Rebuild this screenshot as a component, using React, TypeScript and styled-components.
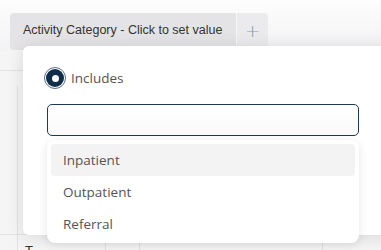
import React from "react";
import styled, { createGlobalStyle } from "styled-components";

const Global = createGlobalStyle`
  html, body { margin: 0; padding: 0; background: #fff; }
  * { box-sizing: border-box; }
`;

const Stage = styled.div`
  position: relative;
  width: 381px;
  height: 250px;
  overflow: hidden;
  background: #f6f6f7;
  display: flex;
  flex-direction: column;
`;

const TopBar = styled.div`
  height: 50px;
  flex: none;
  padding: 13px 0 0 10px;
  background: linear-gradient(to bottom, #fdfdfd 0%, #f3f3f5 100%);
  display: flex;
  align-items: stretch;
  gap: 1px;
`;

const Tab = styled.div<{ $narrow?: boolean }>`
  background: ${(p) => (p.$narrow ? "#ebebee" : "#e4e4e7")};
  border-radius: ${(p) => (p.$narrow ? "0 4px 0 0" : "4px 0 0 4px")};
  width: ${(p) => (p.$narrow ? "31px" : "226px")};
  display: flex;
  align-items: flex-start;
  justify-content: ${(p) => (p.$narrow ? "center" : "flex-start")};
  padding: ${(p) => (p.$narrow ? "9px 0 0 0" : "10px 0 0 13px")};
  font-family: "Liberation Sans", Arial, sans-serif;
  font-size: 12.5px;
  color: ${(p) => (p.$narrow ? "#8a98aa" : "#333")};
`;

const PlusGlyph = styled.span`
  font-size: 18px;
  font-weight: 300;
  line-height: 18px;
  font-family: "DejaVu Sans", sans-serif;
`;

const Grid = styled.div`
  flex: 1;
  display: grid;
  grid-template-columns: 18px 88px 34px 183px 1fr;
  grid-template-rows: 21px 15px 149px 1fr;
  background: #f5f5f6;
`;

const Cell = styled.div<{ $r?: boolean; $b?: boolean }>`
  border-right: ${(p) => (p.$r ? "1px solid #e2e2e4" : "none")};
  border-bottom: ${(p) => (p.$b ? "1px solid #e2e2e4" : "none")};
  font-family: "Liberation Sans", Arial, sans-serif;
  font-size: 13px;
  color: #333;
  padding: 8px 0 0 7px;
`;

const Popover = styled.div`
  position: absolute;
  left: 23px;
  top: 46px;
  width: 380px;
  height: 189px;
  background: #fff;
  border-radius: 6px 0 0 6px;
  box-shadow: 0 2px 18px rgba(0, 0, 0, 0.12);
  padding: 21px 0 0 24px;
  display: flex;
  flex-direction: column;
`;

const RadioRow = styled.label`
  display: flex;
  align-items: center;
  gap: 5px;
  margin-left: -3px;
  height: 22px;
  font-family: "Open Sans", "Noto Sans", sans-serif;
  font-size: 13.5px;
  color: #555;
`;

const RadioOuter = styled.span`
  width: 22px;
  height: 22px;
  border-radius: 50%;
  border: 1.5px solid #5f7286;
  padding: 1px;
  background: #fff;
  display: flex;
`;

const RadioInner = styled.span`
  flex: 1;
  border-radius: 50%;
  background: #102d4a;
  display: flex;
  align-items: center;
  justify-content: center;
  &::after {
    content: "";
    width: 7px;
    height: 7px;
    border-radius: 50%;
    background: #fff;
  }
`;

const Input = styled.div`
  margin-top: 15px;
  width: 312px;
  height: 32px;
  border: 1px solid #1c3a57;
  border-radius: 5px;
  background: linear-gradient(to bottom, #ffffff, #f9f9fa);
`;

const List = styled.div`
  position: absolute;
  left: 24px;
  top: 94px;
  width: 312px;
  height: 103px;
  background: #fff;
  border-radius: 8px;
  box-shadow: 0 2px 10px rgba(0, 0, 0, 0.1);
  padding: 4px 4px 3px 4px;
  display: flex;
  flex-direction: column;
`;

const Item = styled.div<{ $active?: boolean }>`
  height: 32px;
  display: flex;
  align-items: center;
  padding-left: 12px;
  border-radius: 4px;
  background: ${(p) => (p.$active ? "#f3f3f3" : "transparent")};
  font-family: "Open Sans", "Noto Sans", sans-serif;
  font-size: 13.5px;
  color: #555;
`;

export default function App() {
  const cols = 5;
  return (
    <>
      <Global />
      <Stage>
        <TopBar>
          <Tab>Activity Category - Click to set value</Tab>
          <Tab $narrow>
            <PlusGlyph>+</PlusGlyph>
          </Tab>
        </TopBar>
        <Grid>
          {Array.from({ length: 4 * cols }).map((_, i) => {
            const r = Math.floor(i / cols);
            const c = i % cols;
            const right = (r >= 2 && c === 0) || (r === 3 && (c === 1 || c === 2 || c === 3));
            const bottom = r === 0 || (r === 2 && c <= 1);
            return (
              <Cell key={i} $r={right} $b={bottom}>
                {r === 3 && c === 1 ? "T" : null}
              </Cell>
            );
          })}
        </Grid>
        <Popover>
          <RadioRow>
            <RadioOuter>
              <RadioInner />
            </RadioOuter>
            Includes
          </RadioRow>
          <Input />
          <List>
            <Item $active>Inpatient</Item>
            <Item>Outpatient</Item>
            <Item>Referral</Item>
          </List>
        </Popover>
      </Stage>
    </>
  );
}
